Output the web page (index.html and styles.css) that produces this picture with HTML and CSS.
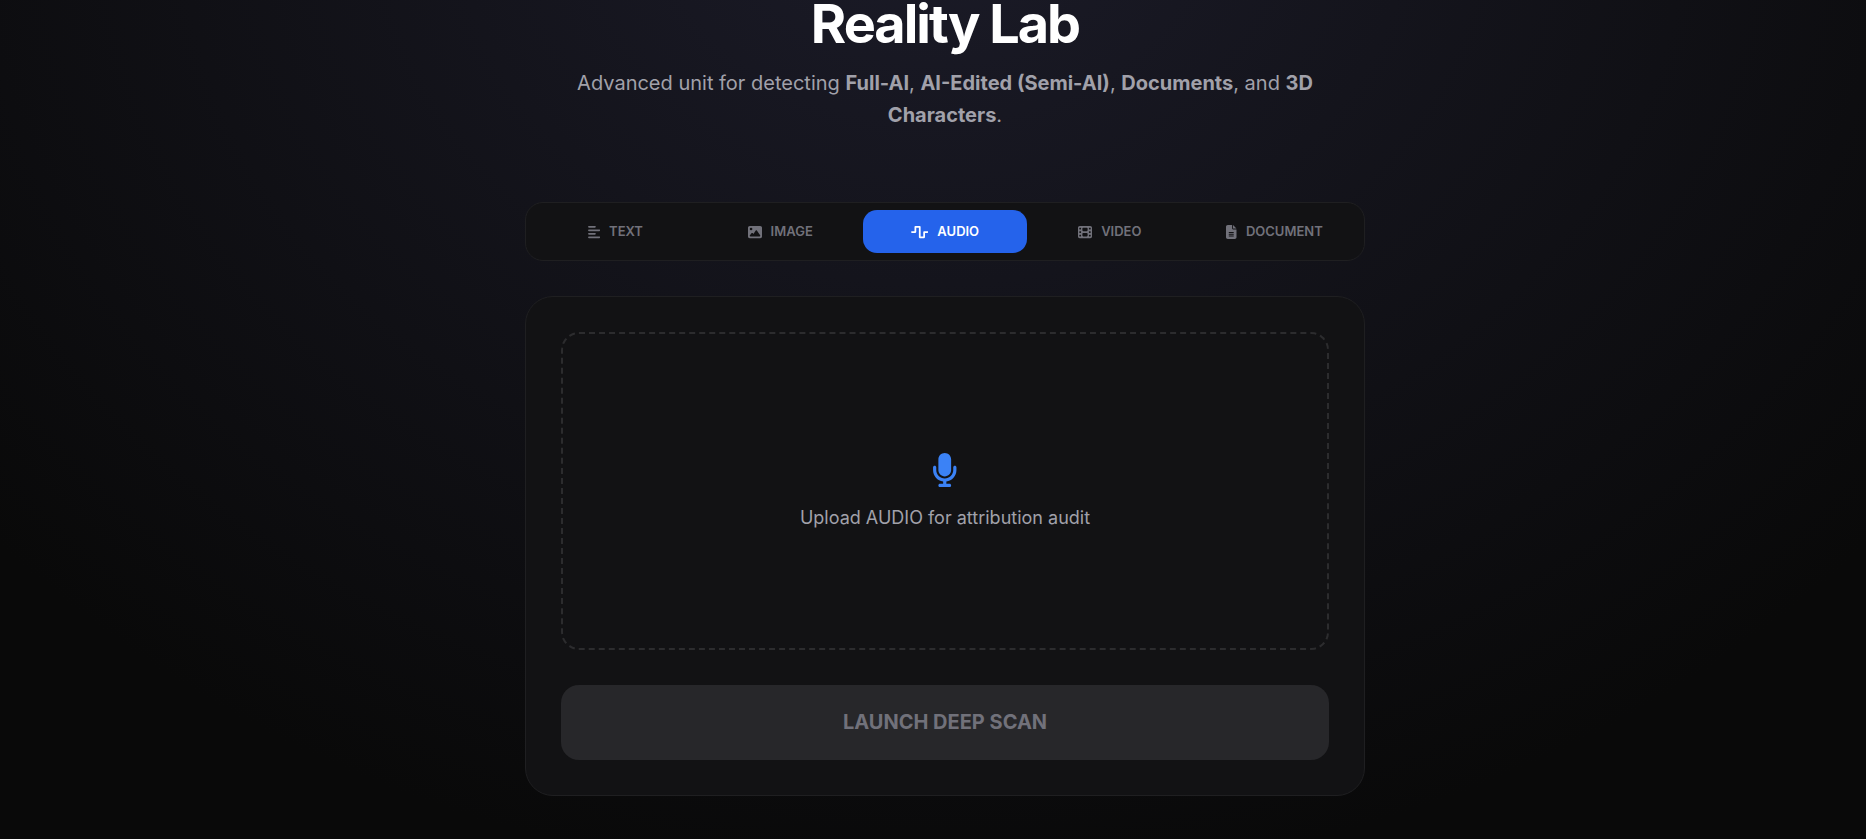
FILE: index.html
```html
<!DOCTYPE html>
<html lang="en">
<head>
<meta charset="utf-8">
<meta name="viewport" content="width=device-width, initial-scale=1">
<title>Reality Lab</title>
<link rel="stylesheet" href="styles.css">
</head>
<body>
<main class="page">
  <header class="hero">
    <h1 class="hero-title">Reality Lab</h1>
    <p class="hero-text">Advanced unit for detecting <strong>Full-AI</strong>, <strong>AI-Edited (Semi-AI)</strong>, <strong>Documents</strong>, and <strong>3D Characters</strong>.</p>
  </header>
  <nav class="tabs" aria-label="Media type">
    <button class="tab" type="button"><svg class="icon" viewBox="0 0 448 512" aria-hidden="true"><path d="M288 64c0 17.700-14.300 32-32 32H32C14.300 96 0 81.700 0 64S14.300 32 32 32H256c17.700 0 32 14.300 32 32zm0 256c0 17.700-14.300 32-32 32H32c-17.700 0-32-14.300-32-32s14.300-32 32-32H256c17.700 0 32 14.300 32 32zM0 192c0-17.700 14.300-32 32-32H416c17.700 0 32 14.300 32 32s-14.300 32-32 32H32c-17.700 0-32-14.300-32-32zM448 448c0 17.700-14.300 32-32 32H32c-17.700 0-32-14.300-32-32s14.300-32 32-32H416c17.700 0 32 14.300 32 32z"/></svg>TEXT</button>
    <button class="tab" type="button"><svg class="icon" viewBox="0 0 512 512" aria-hidden="true"><path d="M0 96C0 60.700 28.700 32 64 32H448c35.300 0 64 28.700 64 64V416c0 35.300-28.700 64-64 64H64c-35.300 0-64-28.700-64-64V96zM323.800 202.500c-4.500-6.600-11.900-10.500-19.800-10.500s-15.400 3.900-19.800 10.500l-87 127.600L170.700 297c-4.600-5.700-11.500-9-18.700-9s-14.200 3.300-18.700 9l-64 80c-5.800 7.200-6.900 17.100-2.900 25.400s12.400 13.600 21.600 13.600h96 32H424c8.900 0 17.100-4.900 21.200-12.800s3.600-17.400-1.400-24.700l-120-176zM112 192a48 48 0 1 0 0-96 48 48 0 1 0 0 96z"/></svg>IMAGE</button>
    <button class="tab tab-active" type="button" aria-current="true"><svg class="icon" viewBox="0 0 640 512" aria-hidden="true"><path d="M128 64c0-17.700 14.300-32 32-32H320c17.700 0 32 14.300 32 32V416h96V256c0-17.700 14.300-32 32-32H608c17.700 0 32 14.300 32 32s-14.300 32-32 32H512V448c0 17.700-14.300 32-32 32H320c-17.700 0-32-14.300-32-32V96H192V256c0 17.700-14.300 32-32 32H32c-17.700 0-32-14.300-32-32s14.300-32 32-32h96V64z"/></svg>AUDIO</button>
    <button class="tab" type="button"><svg class="icon" viewBox="0 0 512 512" aria-hidden="true"><path d="M0 96C0 60.700 28.700 32 64 32H448c35.300 0 64 28.700 64 64V416c0 35.300-28.700 64-64 64H64c-35.300 0-64-28.700-64-64V96zM48 368v32c0 8.800 7.200 16 16 16H96c8.800 0 16-7.200 16-16V368c0-8.800-7.200-16-16-16H64c-8.800 0-16 7.200-16 16zm368-16c-8.800 0-16 7.200-16 16v32c0 8.800 7.200 16 16 16h32c8.800 0 16-7.200 16-16V368c0-8.800-7.200-16-16-16H416zM48 240v32c0 8.800 7.200 16 16 16H96c8.800 0 16-7.200 16-16V240c0-8.800-7.200-16-16-16H64c-8.800 0-16 7.200-16 16zm368-16c-8.800 0-16 7.200-16 16v32c0 8.800 7.200 16 16 16h32c8.800 0 16-7.200 16-16V240c0-8.800-7.200-16-16-16H416zM48 112v32c0 8.800 7.200 16 16 16H96c8.800 0 16-7.200 16-16V112c0-8.800-7.200-16-16-16H64c-8.800 0-16 7.200-16 16zM416 96c-8.800 0-16 7.200-16 16v32c0 8.800 7.200 16 16 16h32c8.800 0 16-7.200 16-16V112c0-8.800-7.200-16-16-16H416zM160 128v64c0 17.700 14.300 32 32 32H320c17.700 0 32-14.300 32-32V128c0-17.700-14.300-32-32-32H192c-17.700 0-32 14.300-32 32zm32 160c-17.700 0-32 14.300-32 32v64c0 17.700 14.300 32 32 32H320c17.700 0 32-14.300 32-32V320c0-17.700-14.300-32-32-32H192z"/></svg>VIDEO</button>
    <button class="tab" type="button"><svg class="icon" viewBox="0 0 384 512" aria-hidden="true"><path d="M64 0C28.700 0 0 28.700 0 64V448c0 35.300 28.700 64 64 64H320c35.300 0 64-28.700 64-64V160H256c-17.700 0-32-14.300-32-32V0H64zM256 0V128H384L256 0zM112 256H272c8.800 0 16 7.200 16 16s-7.200 16-16 16H112c-8.800 0-16-7.200-16-16s7.200-16 16-16zm0 64H272c8.800 0 16 7.200 16 16s-7.200 16-16 16H112c-8.800 0-16-7.200-16-16s7.200-16 16-16zm0 64H272c8.800 0 16 7.200 16 16s-7.200 16-16 16H112c-8.800 0-16-7.200-16-16s7.200-16 16-16z"/></svg>DOCUMENT</button>
  </nav>
  <section class="card">
    <button class="dropzone" type="button">
      <svg class="dropzone-icon" viewBox="0 0 384 512" aria-hidden="true"><path d="M192 0C139 0 96 43 96 96V256c0 53 43 96 96 96s96-43 96-96V96c0-53-43-96-96-96zM64 216c0-13.300-10.700-24-24-24s-24 10.700-24 24v40c0 89.100 66.200 162.700 152 174.400V464H120c-13.300 0-24 10.700-24 24s10.700 24 24 24h72 72c13.300 0 24-10.700 24-24s-10.700-24-24-24H216V430.400c85.800-11.700 152-85.300 152-174.400V216c0-13.300-10.700-24-24-24s-24 10.700-24 24v40c0 70.700-57.300 128-128 128s-128-57.300-128-128V216z"/></svg>
      <span>Upload AUDIO for attribution audit</span>
    </button>
    <button class="launch" type="button" disabled>LAUNCH DEEP SCAN</button>
  </section>
</main>
</body>
</html>
```
FILE: styles.css
```css
* {
  box-sizing: border-box;
}

body {
  margin: 0;
  min-height: 100vh;
  background: #090909 radial-gradient(ellipse 66% 118% at 50% -12%, #1b1b28 0%, #090909 100%) no-repeat;
  color: #ffffff;
  font-family: Inter, sans-serif;
}

button {
  border: 0;
  font-family: inherit;
}

.page {
  display: flex;
  flex-direction: column;
  align-items: center;
  padding: 0 0 43px 24px;
}

.hero {
  width: 100%;
  max-width: 750px;
  margin-bottom: 71px;
  text-align: center;
}

.hero-title {
  margin: 0 0 19px;
  font-size: 54px;
  font-weight: 700;
  line-height: 48px;
  letter-spacing: -2px;
}

.hero-text {
  margin: 0;
  color: #a1a1aa;
  font-size: 20px;
  line-height: 32px;
}

.tabs {
  display: flex;
  width: 100%;
  max-width: 840px;
  margin-bottom: 35px;
  padding: 7px;
  border: 1px solid #1f1f21;
  border-radius: 18px;
  background: #121214;
}

.tab {
  display: flex;
  flex: 1 1 0;
  align-items: center;
  justify-content: center;
  gap: 9px;
  padding: 13px 0;
  border-radius: 14px;
  background: transparent;
  color: #71717a;
  font-size: 13px;
  font-weight: 600;
  line-height: 17px;
}

.tab-active {
  background: #2563eb;
  color: #ffffff;
}

.icon {
  height: 14px;
  fill: currentColor;
}

.card {
  display: flex;
  flex-direction: column;
  gap: 35px;
  width: 100%;
  max-width: 840px;
  padding: 35px;
  border: 1px solid #1f1f21;
  border-radius: 28px;
  background: #121214;
}

.dropzone {
  display: flex;
  flex-direction: column;
  align-items: center;
  justify-content: center;
  gap: 20px;
  min-height: 318px;
  border: 2px dashed #2c2c2e;
  border-radius: 18px;
  background: transparent;
  color: #a1a1aa;
  font-size: 18px;
  line-height: 22px;
}

.dropzone-icon {
  height: 34px;
  fill: #3b82f6;
}

.launch {
  padding: 24px;
  border-radius: 18px;
  background: #27272a;
  color: #71717a;
  font-size: 20px;
  font-weight: 700;
  line-height: 27px;
}
```
